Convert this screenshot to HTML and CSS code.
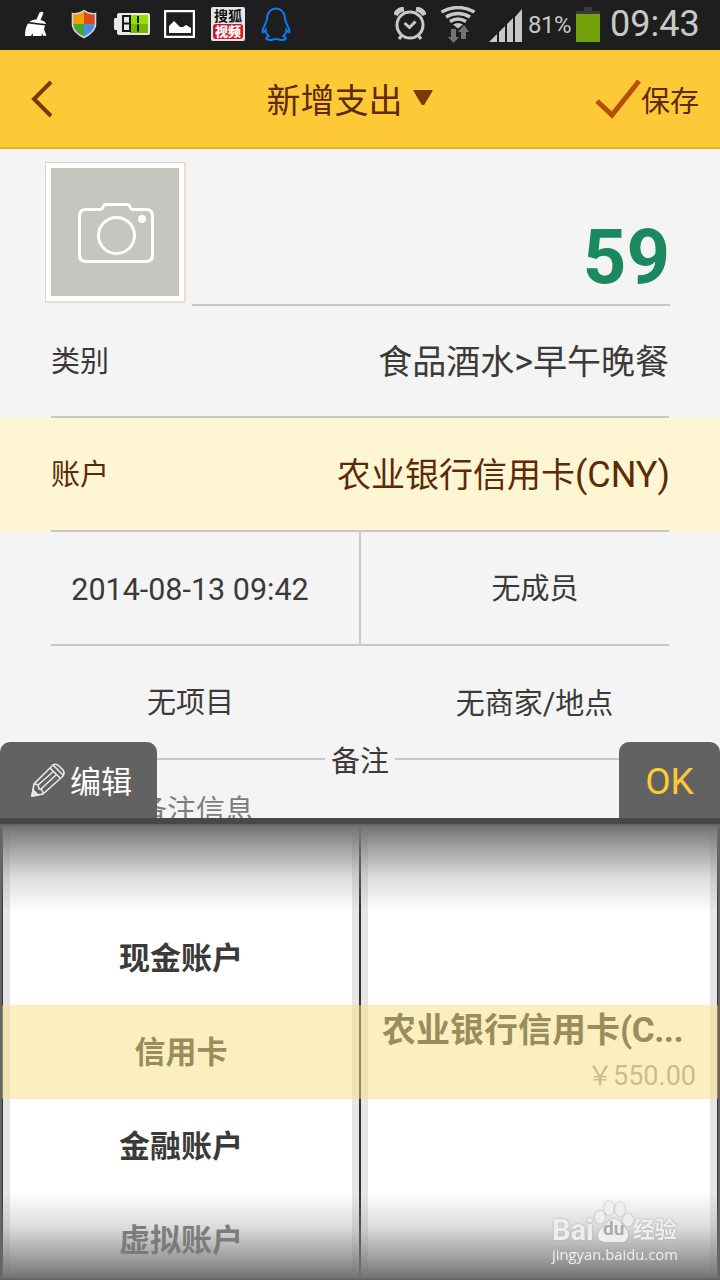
FILE: index.html
```html
<!DOCTYPE html>
<html lang="zh-CN">
<head>
    <meta charset="UTF-8">
    <title>新增支出</title>
    <link rel="stylesheet" href="styles.css">
</head>
<body>
    <div class="screen">
        <div class="statusbar">
            <svg class="ic-broom" width="24" height="26" viewBox="0 0 24 26">
                <path d="M15.500 1.500q3-1.500 4 .500l-3 7q5 1 5.500 4L5 11q4-3 7.500-2.500z" fill="#fff"/>
                <path d="M4 12.500l17 2-1 4 2.500 6-3.500 .500-1-3-.500 3H9l-.500-3-1.500 3H1q0-8 3-12.500z" fill="#fff"/>
            </svg>
            <svg class="ic-shield" width="26" height="30" viewBox="0 0 26 30">
                <defs>
                    <clipPath id="shield"><path d="M13 2q5 4 11 3v10c0 6-6 11-11 13C8 26 2 21 2 15V5q6 1 11-3z"/></clipPath>
                </defs>
                <g clip-path="url(#shield)">
                    <path d="M0 0h13v15H0z" fill="#f0a000"/>
                    <path d="M13 0h13v15H13z" fill="#e04818"/>
                    <path d="M0 15h13v15H0z" fill="#44a735"/>
                    <path d="M13 15h13v15H13z" fill="#4a8ee0"/>
                </g>
                <path d="M13 1.500q5 4 11.500 3v10.500c0 6-6 11-11.500 13.500C7 26 1.500 21 1.500 15V4.500q6.500 1 11.500-3z" fill="none" stroke="#d8d8d8" stroke-width="1.600"/>
            </svg>
            <svg class="ic-power" width="36" height="24" viewBox="0 0 36 24">
                <path d="M5 1h29q2 0 2 2v18q0 2-2 2H5q-2 0-2-2v-3H1q-1 0-1-2V8q0-2 1-2h2V3q0-2 2-2z" fill="#e8e8e8"/>
                <path d="M16 3h18v9H16z" fill="#98dc00"/>
                <path d="M16 12h18v9H16z" fill="#76b900"/>
                <path d="M9 4h7v15H9zM9 11.500h7M24 4v7M24 12.500v7" fill="none" stroke="#151a10" stroke-width="2"/>
            </svg>
            <svg class="ic-image" width="31" height="28" viewBox="0 0 31 28">
                <path d="M1 1h29v26H1z" fill="none" stroke="#fff" stroke-width="2.400"/>
                <path d="M5 23v-7l5-5 6 6h3l3-2 5 3v5z" fill="#fff"/>
            </svg>
            <div class="sohu"><span>搜狐</span><b>视频</b></div>
            <svg class="ic-penguin" width="30" height="34" viewBox="0 0 30 34">
                <path d="M6 12C6-2 24-2 24 12c0 3 4 8 4.500 12 .2 2-1 2-3-1 0 3-1 4-3 6 4 2 2 4-1 4-3 0-4-1-6.500-1S11.500 33 8.500 33c-3 0-5-2-1-4-2-2-3-3-3-6-2 3-3.200 3-3 1C2 20 6 15 6 12z" fill="none" stroke="#0a7cf5" stroke-width="2"/>
            </svg>
            <svg class="ic-alarm" width="32" height="34" viewBox="0 0 32 34">
                <g fill="none" stroke="#c8c8c8" stroke-width="3">
                    <circle cx="16" cy="18" r="13"/>
                    <path d="M10.500 16l5 4.500 6-6M8 28l-3 4M24 28l3 4"/>
                    <path d="M1.500 8q2-5 8.500-6M30.500 8q-2-5-8.500-6" stroke-width="5"/>
                </g>
            </svg>
            <svg class="ic-wifi" width="36" height="37" viewBox="0 0 36 37">
                <g fill="none" stroke="#c8c8c8" stroke-width="3.400">
                    <path d="M1.500 6q16.500-9 33 0M6 11q12-7 24 0M10 15.500q8-5 16 0"/>
                </g>
                <path d="M13 18.500q5-3 10 0l-5 4z" fill="#c8c8c8"/>
                <path d="M11 23h5v8h3l-5.500 6L8 31h3zM21 33v-7h-3l6-7 5 7h-3v7z" fill="#747474"/>
            </svg>
            <svg class="ic-signal" width="33" height="33" viewBox="0 0 33 33">
                <path d="M0 33l8-8v8zM10 23l6-6v16h-6zM18 15l6-6v24h-6zM26 8l7-8v33h-7z" fill="#c8c8c8"/>
            </svg>
            <span class="percent">81%</span>
            <svg class="ic-battery" width="24" height="35" viewBox="0 0 24 35">
                <path d="M8 0h8v4h8v4H0V4h8z" fill="#3b3b3b"/>
                <path d="M0 7h24v28H0z" fill="#72a10b"/>
            </svg>
            <span class="clock">09:43</span>
        </div>

        <div class="header">
            <svg class="back" width="22" height="38" viewBox="0 0 22 38">
                <path d="M20 2L3 19l17 17" fill="none" stroke="#7a3900" stroke-width="4"/>
            </svg>
            <div class="title">
                <span>新增支出</span>
                <svg width="20" height="16" viewBox="0 0 20 16"><path d="M1 0h18q1 0 .500 1l-8 13.500q-1.500 1-3 0L.500 1Q0 0 1 0z" fill="#7a3900"/></svg>
            </div>
            <div class="save">
                <svg width="46" height="40" viewBox="0 0 46 40"><path d="M2 22l15 14L44 2" fill="none" stroke="#b94e08" stroke-width="5"/></svg>
                <span>保存</span>
            </div>
        </div>

        <div class="form">
            <div class="top">
                <div class="photo">
                    <svg width="76" height="60" viewBox="0 0 76 60" fill="none" stroke="#fff" stroke-width="3">
                        <path d="M8 6.500h14q2 0 3-2.500t3-2.500h21q2 0 3 2.500t3 2.500h13q6.500 0 6.500 6.500v39q0 6.500-6.500 6.500H8q-6.500 0-6.500-6.500V13Q1.500 6.500 8 6.500z"/>
                        <circle cx="38.500" cy="32.500" r="18"/>
                        <circle cx="64" cy="16" r="4" fill="#fff" stroke="none"/>
                    </svg>
                </div>
                <div class="amount">59</div>
            </div>
            <div class="row">
                <span class="label">类别</span>
                <span class="value">食品酒水<span class="latin">&gt;</span>早午晚餐</span>
            </div>
            <div class="row active">
                <span class="label">账户</span>
                <span class="value">农业银行信用卡<span class="latin">(CNY)</span></span>
            </div>
            <div class="pair split">
                <div class="date">2014-08-13 09:42</div>
                <div>无成员</div>
            </div>
            <div class="pair">
                <div>无项目</div>
                <div>无商家<span class="latin">/</span>地点</div>
            </div>
            <div class="divider"><span>备注</span></div>
            <div class="memo">备注信息</div>
        </div>

        <div class="picker">
            <div class="tabs">
                <div class="tab edit">
                    <svg width="34" height="34" viewBox="0 0 34 34" fill="none" stroke="#e8e8e8" stroke-width="1.600">
                        <path d="M1 33l2-12L22 2q3-2 6 1l4 4q2 3 0 6L12 31z"/>
                        <path d="M3 21q5 0 5 5 4 0 4 5M19 5l10 10M22 2l10 10M7 22L23 8M10 26L26 11"/>
                        <path d="M1 33l1-6 5 5z" fill="#e8e8e8"/>
                    </svg>
                    <span>编辑</span>
                </div>
                <div class="tab ok">OK</div>
            </div>
            <div class="wheels">
                <div class="wheel">
                    <div class="item">现金账户</div>
                    <div class="item">信用卡</div>
                    <div class="item">金融账户</div>
                    <div class="item faded">虚拟账户</div>
                </div>
                <div class="wheel">
                    <div class="item"></div>
                    <div class="item account">
                        <div class="name">农业银行信用卡<span class="latin">(C...</span></div>
                        <div class="balance">￥<span>550.00</span></div>
                    </div>
                </div>
                <div class="band"></div>
                <div class="shade"></div>
                <div class="watermark">
                    <div class="brand">
                        <span>Bai</span>
                        <span class="paw">
                            <svg width="38" height="42" viewBox="0 0 38 42" fill="#eee">
                                <ellipse cx="5" cy="16" rx="5" ry="6.500"/>
                                <ellipse cx="14" cy="7" rx="5" ry="7"/>
                                <ellipse cx="25" cy="8" rx="5" ry="7"/>
                                <ellipse cx="33" cy="19" rx="5" ry="6.500"/>
                                <path d="M19 18c5 0 7 5 11 9 6 6 3 14-4 14H11C2 41 1 33 6 28c5-4 8-10 13-10z"/>
                            </svg>
                            <i>du</i>
                        </span>
                        <span class="cn">经验</span>
                    </div>
                    <div class="site">jingyan.baidu.com</div>
                </div>
            </div>
        </div>
    </div>
</body>
</html>
```

FILE: styles.css
```css
* {
    box-sizing: border-box;
}

body {
    margin: 0;
    font-family: Roboto, "Noto Sans CJK SC", sans-serif;
    color: #3c3a38;
}

svg {
    display: block;
    flex: none;
}

.screen {
    position: relative;
    width: 720px;
    height: 1280px;
    overflow: hidden;
    background: #f4f4f4;
}

/* status bar */
.statusbar {
    display: flex;
    align-items: center;
    height: 50px;
    padding-left: 24px;
    background: #1e1e1e;
    color: #c8c8c8;
}

.ic-broom { margin-top: -3px; }
.ic-shield { margin-left: 23px; margin-top: -2px; }
.ic-power { margin-left: 17px; margin-top: -2px; }
.ic-image { margin-left: 14px; margin-top: -2px; }
.ic-penguin { margin-left: 16px; margin-top: -3px; }
.ic-alarm { margin-left: 103px; margin-top: -2px; }
.ic-wifi { margin-left: 14px; margin-top: -2px; }
.ic-signal { margin-left: 13px; }
.ic-battery { margin-left: 5px; margin-top: -1px; }

.sohu {
    width: 34px;
    height: 34px;
    margin-left: 16px;
    margin-top: -2px;
    padding: 2px;
    border-radius: 2px;
    background: #e6e6e6;
    color: #111;
    font-size: 14px;
    font-weight: 700;
    line-height: 15px;
    text-align: center;
}

.sohu span,
.sohu b {
    display: block;
    height: 15px;
}

.sohu b {
    background: #d01822;
    border-radius: 3px;
    color: #fff;
    font-size: 13px;
}

.percent {
    width: 43px;
    margin-left: 6px;
    font-size: 24px;
    letter-spacing: -0.5px;
}

.clock {
    margin-left: 10px;
    font-size: 36px;
    line-height: 46px;
    padding-bottom: 2px;
}

/* header */
.header {
    display: grid;
    grid-template-columns: 150px 1fr 150px;
    align-items: center;
    height: 99px;
    background: #fec937;
    border-bottom: 2px solid #eeb420;
    color: #5d2a08;
}

.back {
    margin-left: 31px;
}

.title {
    display: flex;
    align-items: center;
    justify-content: center;
    gap: 10px;
    padding: 0 21px 1px 0;
    font-size: 34px;
}

.save {
    display: flex;
    align-items: center;
    justify-content: flex-end;
    padding-right: 21px;
    font-size: 29px;
}

.save span {
    padding-top: 1px;
}

/* form */
.top {
    display: flex;
    gap: 6px;
    height: 157px;
    padding: 13px 51px 0 45px;
}

.photo {
    display: flex;
    align-items: center;
    justify-content: center;
    width: 141px;
    height: 141px;
    padding: 1px 0 0 1px;
    border: 1px solid #d8d8d8;
    border-right: 2px solid #f0dcc8;
    border-bottom: 2px solid #e8dcd2;
    background: #c7c5c0;
    box-shadow: inset 0 0 0 5px #fff;
}

.amount {
    flex: 1;
    height: 144px;
    border-bottom: 2px solid #c9c9c9;
    padding-top: 47px;
    margin-right: -1px;
    padding-right: 0;
    color: #1b8960;
    font-size: 76px;
    font-weight: 700;
    line-height: 96px;
    text-align: right;
}

.row {
    display: flex;
    align-items: center;
    justify-content: space-between;
    height: 112px;
    padding: 0 51px 6px;
    background: linear-gradient(#c9c9c9, #c9c9c9) center bottom / 618px 2px no-repeat;
}

.label {
    font-size: 29px;
}

.value {
    font-size: 34px;
}

.row.active {
    height: 114px;
    padding-right: 50px;
    background-color: #fef6d3;
    color: #5d2a08;
}

.value .latin {
    font-size: 36px;
}

.pair {
    display: grid;
    grid-template-columns: 1fr 1fr;
    height: 112px;
    margin: 0 51px;
    font-size: 29px;
    text-align: center;
    line-height: 115px;
}

.pair.split {
    grid-template-columns: 310px 1fr;
    height: 114px;
    border-bottom: 2px solid #c9c9c9;
}

.pair.split .date {
    height: 112px;
    border-right: 2px solid #c9c9c9;
    font-size: 30.5px;
}

.pair > div:first-child {
    padding-right: 30px;
}

.pair > div:last-child {
    padding-left: 40px;
}

.pair .latin {
    font-size: 30.5px;
}

.divider {
    display: flex;
    align-items: center;
    height: 42px;
    margin: -20px 51px 0;
    font-size: 29px;
    gap: 6px;
}

.divider::before,
.divider::after {
    content: "";
    flex: 1;
    height: 2px;
    background: #c9c9c9;
}

.memo {
    padding-left: 138px;
    margin-top: 7px;
    color: #7d7d7d;
    font-size: 29px;
}

/* account picker, slides over the form */
.picker {
    position: absolute;
    left: 0;
    right: 0;
    bottom: 0;
}

.tabs {
    display: flex;
    justify-content: space-between;
    height: 82px;
    border-bottom: 6px solid #484848;
}

.tab {
    display: flex;
    align-items: center;
    justify-content: center;
    background: #626262;
    border-radius: 10px 10px 0 0;
}

.edit {
    width: 157px;
    gap: 5px;
    padding-left: 6px;
    color: #fff;
    font-size: 31px;
}

.edit span {
    margin-top: -2px;
}

.ok {
    width: 101px;
    color: #ffc836;
    font-size: 37px;
    padding-top: 3px;
}

.wheels {
    position: relative;
    display: grid;
    grid-template-columns: 357px 357px;
    gap: 2px;
    height: 456px;
    padding: 2px 2px;
    background: #333;
}

.wheel {
    padding-top: 86px;
    background: #fff;
    border: solid #e6e6e6;
    border-width: 0 7px 0 8px;
    overflow: hidden;
}

.wheel:first-child {
    margin-left: 1px;
    border-left-width: 7px;
}

.wheel + .wheel {
    margin-right: 1px;
    border-left-width: 7px;
    border-right-width: 7px;
}

.item {
    height: 94px;
    font-size: 31px;
    font-weight: 700;
    line-height: 94px;
    text-align: center;
}

.faded {
    color: #707070;
}

.account {
    padding: 0 14px;
    line-height: normal;
    text-align: left;
}

.name {
    height: 50px;
    font-size: 34px;
    line-height: 49px;
    white-space: nowrap;
}

.name .latin {
    font-size: 35px;
    letter-spacing: -0.5px;
}

.balance {
    color: #9b9b9b;
    font-size: 26px;
    font-weight: 400;
    line-height: 40px;
    text-align: right;
}

.balance span {
    font-size: 27px;
}

.band {
    position: absolute;
    left: 2px;
    right: 2px;
    top: 181px;
    height: 94px;
    background: rgba(247, 223, 129, 0.5);
}

.shade {
    position: absolute;
    inset: 0;
    border: 2px solid #666;
    background:
        linear-gradient(#747474, rgba(125, 125, 125, 0.72) 25%, rgba(150, 150, 150, 0.35) 58%, rgba(255, 255, 255, 0)) top / 100% 86px no-repeat,
        linear-gradient(rgba(255, 255, 255, 0), rgba(150, 150, 150, 0.35) 42%, rgba(125, 125, 125, 0.72) 75%, #747474) bottom / 100% 86px no-repeat;
}

/* site mark */
.watermark {
    position: absolute;
    left: 552px;
    top: 378px;
    color: #eee;
    filter: drop-shadow(0 0 1px #aaa);
}

.brand {
    display: flex;
    align-items: flex-end;
    height: 41px;
    font-size: 29px;
    font-weight: 700;
    line-height: 26px;
}

.paw {
    position: relative;
    margin-left: 1px;
}

.paw i {
    position: absolute;
    left: 0;
    right: 0;
    bottom: 4px;
    color: #aaa;
    font-size: 19px;
    font-style: normal;
    line-height: 20px;
    text-align: center;
}

.cn {
    font-size: 22px;
}

.site {
    font-family: "Open Sans", sans-serif;
    font-size: 14.8px;
    line-height: 20px;
    margin-top: 1px;
}
```
